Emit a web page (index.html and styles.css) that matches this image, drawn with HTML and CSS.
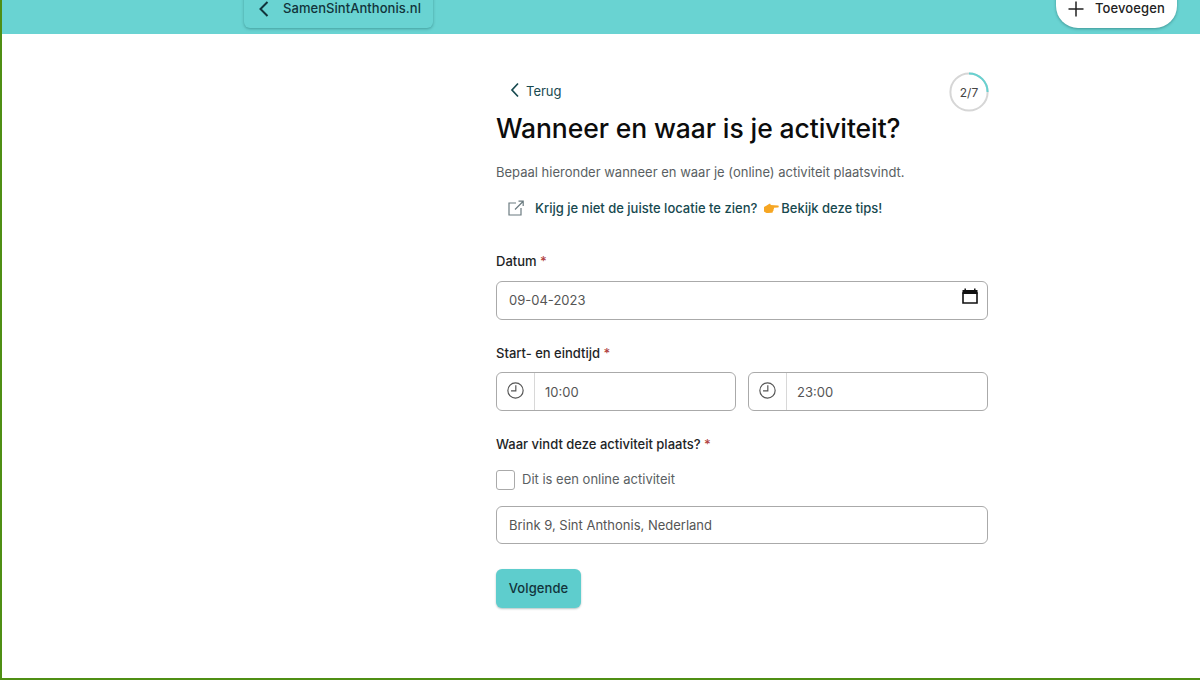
FILE: index.html
```html
<!DOCTYPE html>
<html lang="nl">
<head>
<meta charset="utf-8">
<title>Wanneer en waar</title>
<link rel="stylesheet" href="styles.css">
</head>
<body>
<div class="frame">
  <header class="topbar">
    <a class="site-link">
      <svg class="site-chevron" width="12" height="18" viewBox="0 0 12 18"><path d="M9.5 2 L2.5 9 L9.5 16" fill="none" stroke="#12343b" stroke-width="2"/></svg>
      <span>SamenSintAnthonis.nl</span>
    </a>
    <a class="add-btn">
      <svg width="16" height="16" viewBox="0 0 16 16"><path d="M8 0.5V15.5M0.5 8H15.5" fill="none" stroke="#222" stroke-width="1.5"/></svg>
      <span>Toevoegen</span>
    </a>
  </header>
  <main class="content">
    <div class="form-col">
      <div class="back-row">
        <a class="back">
          <svg class="back-chevron" width="10" height="16" viewBox="0 0 10 16"><path d="M8 1.5 L2 8 L8 14.5" fill="none" stroke="#17494f" stroke-width="1.7"/></svg>
          <span>Terug</span>
        </a>
        <div class="progress">
          <svg class="progress-ring" width="40" height="40" viewBox="0 0 40 40">
            <circle cx="20" cy="20" r="18.6" fill="none" stroke="#d6d6d6" stroke-width="2"/>
            <path d="M20 1.4 A18.6 18.6 0 0 1 38.6 20" fill="none" stroke="#67d1d0" stroke-width="2"/>
          </svg>
          <span class="progress-text">2/7</span>
        </div>
      </div>
      <h1>Wanneer en waar is je activiteit?</h1>
      <p class="intro">Bepaal hieronder wanneer en waar je (online) activiteit plaatsvindt.</p>
      <a class="tips">
        <svg width="16" height="16" viewBox="0 0 16 16"><path d="M8 3H1V15H13V8M7 9.5L15 1.5M10.5 1.2H15.2V6" fill="none" stroke="#6b7b80" stroke-width="1.2"/></svg>
        <span class="tips-text">Krijg je niet de juiste locatie te zien?
          <svg class="hand" width="16" height="15" viewBox="0 0 16 14"><path d="M1 5.5C3 4.5 4.5 3.5 6 2.5C7 2 8 2.5 7.5 3.5L15 4C16 4.2 16 5.8 15 6L10.8 6.2C11.2 7 11 7.8 10.4 8C10.8 8.8 10.4 9.5 9.8 9.7C10 10.7 9.4 11.2 8.6 11.2L5 11.5C3 11.5 1.8 10.8 1 10Z" fill="#f6a623"/></svg>
          Bekijk deze tips!</span>
      </a>
      <div class="label first">Datum <span class="req">*</span></div>
      <div class="field date-field">
        <span class="date-value">09-04-2023</span>
        <svg class="cal" width="16" height="16" viewBox="0 0 16 16"><path d="M1 5H15V15H1Z" fill="none" stroke="#111" stroke-width="1.6"/><path d="M0.5 2H15.5V6H0.5Z" fill="#111"/><path d="M3.2 0.5V2.5M12.8 0.5V2.5" stroke="#111" stroke-width="1.5"/></svg>
      </div>
      <div class="label">Start- en eindtijd <span class="req">*</span></div>
      <div class="time-row">
        <div class="time-field">
          <div class="addon"><svg width="17" height="17" viewBox="0 0 16 16"><circle cx="8" cy="8" r="7.2" fill="none" stroke="#555" stroke-width="1.1"/><path d="M8.3 3V8.4H3.8" fill="none" stroke="#555" stroke-width="1.1"/></svg></div>
          <span class="time-value">10:00</span>
        </div>
        <div class="time-field">
          <div class="addon"><svg width="17" height="17" viewBox="0 0 16 16"><circle cx="8" cy="8" r="7.2" fill="none" stroke="#555" stroke-width="1.1"/><path d="M8.3 3V8.4H3.8" fill="none" stroke="#555" stroke-width="1.1"/></svg></div>
          <span class="time-value">23:00</span>
        </div>
      </div>
      <div class="label">Waar vindt deze activiteit plaats? <span class="req">*</span></div>
      <label class="check-row"><span class="box"></span><span class="check-text">Dit is een online activiteit</span></label>
      <div class="field addr-field"><span>Brink 9, Sint Anthonis, Nederland</span></div>
      <button class="next" type="button">Volgende</button>
    </div>
  </main>
</div>
</body>
</html>
```
FILE: styles.css
```css
* { box-sizing: border-box; }
html, body { margin: 0; height: 100%; }
body {
  font-family: "Inter", "Lato", sans-serif;
  background: #fff;
  overflow: hidden;
}
.frame {
  height: 680px;
  border-left: 2px solid #4f8f14;
  border-bottom: 2px solid #4f8f14;
  overflow: hidden;
}
.topbar {
  height: 34px;
  background: #69d3d2;
  display: flex;
  align-items: flex-end;
  padding: 0 23px 6px 244px;
  overflow: hidden;
  gap: 623px;
  margin-left: -2px;
}
.site-link {
  width: 189px;
  height: 44px;
  flex: none;
  display: flex;
  align-items: flex-end;
  padding: 0 0 12px 14px;
  gap: 13px;
  border-radius: 0 0 6px 6px;
  background: #69d3d2;
  box-shadow: 0 1px 3px rgba(0, 60, 60, .35);
  color: #12343b;
  font-size: 13px;
  font-weight: 500;
  letter-spacing: .05px;
}
.site-chevron { margin-bottom: -2px; }
.add-btn {
  width: 121px;
  height: 44px;
  flex: none;
  display: flex;
  align-items: flex-end;
  padding: 0 0 12px 12px;
  gap: 11px;
  background: #fff;
  border-radius: 0 0 22px 22px;
  box-shadow: 0 1px 3px rgba(0, 60, 60, .4);
  color: #222;
  font-size: 13px;
  font-weight: 500;
  letter-spacing: .1px;
}
.add-btn svg { margin-bottom: -1px; }
.content { padding-left: 494px; }
.form-col { width: 492px; }
.back-row {
  display: flex;
  justify-content: space-between;
  align-items: flex-start;
  padding-top: 38px;
  height: 78px;
}
.back {
  display: flex;
  align-items: center;
  gap: 6px;
  margin: 11px 0 0 14px;
  color: #17494f;
  font-size: 13px;
  font-weight: 400;
}
.back-chevron { margin-top: -2px; }
.progress {
  position: relative;
  left: 1px;
  width: 40px;
  height: 40px;
  display: flex;
  align-items: center;
  justify-content: center;
}
.progress-ring { position: absolute; inset: 0; }
.progress-text { font-size: 12px; color: #444; }
h1 {
  margin: 0;
  font-size: 26.5px;
  line-height: 33px;
  font-weight: 500;
  color: #0c0c0c;
  letter-spacing: -.1px;
}
.intro {
  margin: 18px 0 0;
  font-size: 13px;
  line-height: 18px;
  color: #5a5f63;
}
.tips {
  display: flex;
  align-items: center;
  gap: 11px;
  margin: 18px 0 0 12px;
  height: 18px;
  color: #17494f;
  font-size: 13px;
  font-weight: 500;
}
.hand { vertical-align: -3px; margin: 0 -1px 0 2px; }
.label {
  margin-top: 24px;
  font-size: 13px;
  line-height: 18px;
  font-weight: 500;
  color: #1d2426;
}
.label.first { margin-top: 35px; }
.req { color: #b0413e; }
.field {
  display: flex;
  align-items: center;
  justify-content: space-between;
  margin-top: 11px;
  height: 39px;
  padding: 0 12px;
  border: 1px solid #aaa;
  border-radius: 6px;
  font-size: 13px;
  color: #555;
}
.date-value { margin-top: -1px; }
.cal { margin: -9px -3px 0 0; }
.time-row {
  display: flex;
  gap: 12px;
  margin-top: 10px;
}
.time-field {
  flex: 1;
  height: 39px;
  display: flex;
  align-items: center;
  border: 1px solid #aaa;
  border-radius: 6px;
  font-size: 13px;
  color: #555;
}
.addon {
  width: 38px;
  height: 100%;
  border-right: 1px solid #d8d8d8;
  display: flex;
  align-items: center;
  justify-content: center;
  padding-bottom: 2px;
}
.time-value { margin-left: 10px; }
.check-row {
  display: flex;
  align-items: center;
  gap: 7px;
  margin-top: 17px;
  font-size: 13px;
  color: #5a5f63;
}
.check-text { margin-top: -2px; }
.box {
  width: 19px;
  height: 20px;
  border: 1px solid #aaa;
  border-radius: 3px;
}
.addr-field { margin-top: 16px; height: 38px; }
.next {
  display: block;
  margin-top: 25px;
  width: 85px;
  height: 39px;
  padding: 0 0 2px;
  border: 0;
  border-radius: 6px;
  background: #5ecdcd;
  box-shadow: 0 1px 2px rgba(0, 60, 60, .3);
  color: #12343b;
  font: 500 13px "Inter", "Lato", sans-serif;
  letter-spacing: .1px;
}
```
